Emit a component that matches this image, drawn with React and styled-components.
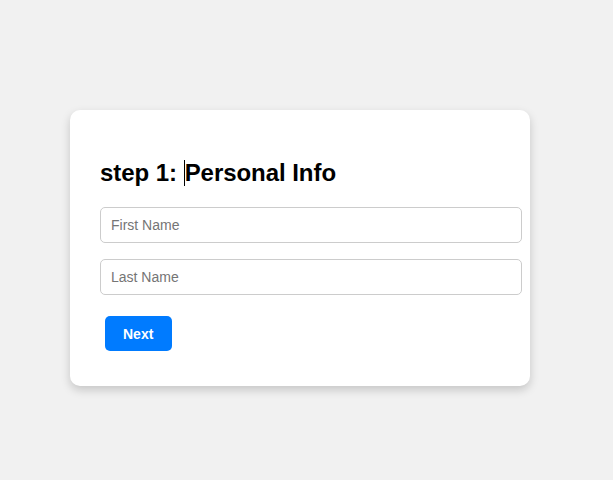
import React from "react";
import styled, { createGlobalStyle } from "styled-components";

const Global = createGlobalStyle`
  html, body { margin: 0; padding: 0; }
  body {
    background: #f1f1f1;
    font-family: "Liberation Sans", Arial, sans-serif;
  }
`;

const Page = styled.div`
  display: flex;
  align-items: flex-start;
  justify-content: flex-start;
  padding: 110px 0 0 70px;
  min-height: 480px;
  box-sizing: border-box;
`;

const Card = styled.div`
  width: 400px;
  background: #fff;
  border-radius: 10px;
  padding: 30px;
  box-shadow: 0 4px 10px rgba(0, 0, 0, 0.18);
`;

const Title = styled.h2`
  margin: 19px 0 20px;
  font-size: 24px;
  font-weight: bold;
  color: #000;
  line-height: 28px;
  letter-spacing: -0.05px;
`;

const Caret = styled.span`
  display: inline-block;
  width: 1px;
  height: 26px;
  background: #000;
  vertical-align: -5px;
`;

const Input = styled.input`
  display: block;
  width: 100%;
  padding: 9px 10px;
  margin: 0 0 16px;
  border: 1px solid #ccc;
  border-radius: 5px;
  font-family: "Liberation Sans", Arial, sans-serif;
  font-size: 14px;
  line-height: 16px;
  color: #333;
  outline: none;
  &::placeholder { color: #757575; }
`;

const Button = styled.button`
  display: block;
  margin: 21px 5px 5px;
  padding: 10px 19px 9px 18px;
  background: #007bff;
  color: #fff;
  border: none;
  border-radius: 5px;
  font-family: "Liberation Sans", Arial, sans-serif;
  font-size: 14px;
  font-weight: bold;
  line-height: 16px;
  cursor: pointer;
`;

export default function App() {
  return (
    <>
      <Global />
      <Page>
        <Card>
          <Title>
            step 1: <Caret />Personal Info
          </Title>
          <Input placeholder="First Name" />
          <Input placeholder="Last Name" />
          <Button>Next</Button>
        </Card>
      </Page>
    </>
  );
}
